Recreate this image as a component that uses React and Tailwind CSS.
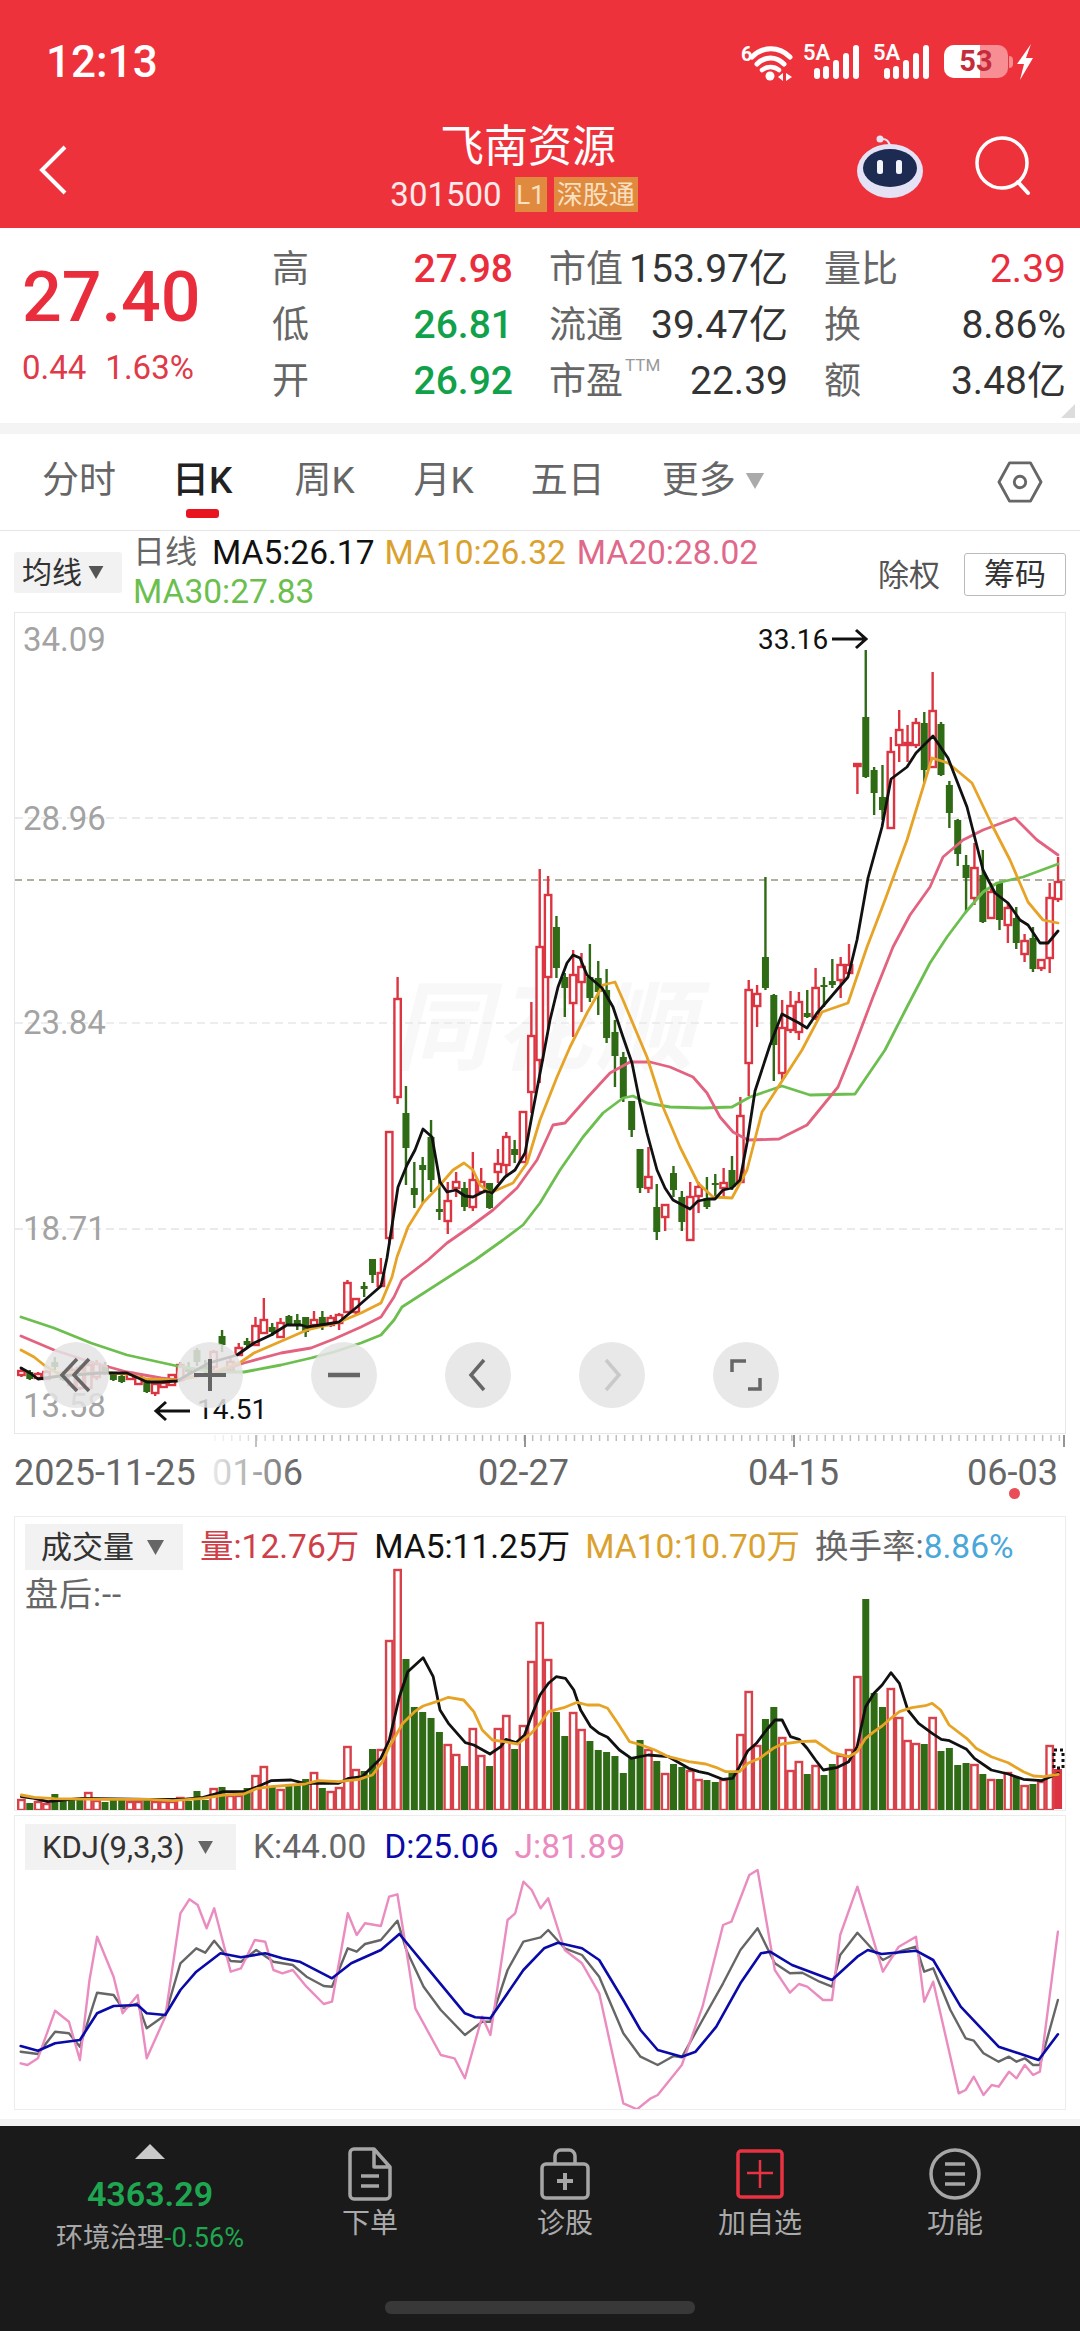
import { Fragment } from 'react';

const RED = '#dc3541';
const GREEN = '#2f6a14';

// [bodyTop, bodyBottom, wickTop, wickBottom, isRed]
const candles = [
  [1371, 1375, 1367, 1377, 1], [1372, 1379, 1370, 1380, 0], [1374, 1378, 1372, 1379, 1], [1372, 1379, 1370, 1380, 1],
  [1362, 1367, 1357, 1370, 0], [1373, 1380, 1371, 1381, 0], [1370, 1385, 1365, 1388, 1], [1368, 1388, 1365, 1390, 1],
  [1365, 1388, 1362, 1390, 1], [1364, 1377, 1360, 1380, 1], [1365, 1373, 1362, 1375, 0], [1373, 1380, 1372, 1381, 0],
  [1376, 1382, 1372, 1383, 0], [1373, 1379, 1372, 1380, 1], [1377, 1384, 1376, 1384, 1], [1380, 1392, 1379, 1393, 0],
  [1384, 1393, 1383, 1396, 1], [1383, 1387, 1382, 1388, 1], [1375, 1385, 1374, 1386, 1], [1365, 1380, 1362, 1382, 1],
  [1369, 1372, 1362, 1375, 0], [1350, 1362, 1348, 1366, 0], [1366, 1370, 1360, 1373, 0], [1352, 1367, 1350, 1370, 1],
  [1336, 1345, 1330, 1352, 0], [1362, 1370, 1358, 1372, 1], [1348, 1355, 1343, 1356, 1], [1341, 1345, 1338, 1347, 0],
  [1326, 1345, 1317, 1346, 1], [1320, 1333, 1298, 1334, 1], [1327, 1332, 1323, 1336, 0], [1323, 1337, 1318, 1337, 1],
  [1316, 1324, 1315, 1325, 0], [1320, 1325, 1314, 1330, 0], [1317, 1332, 1317, 1337, 0], [1320, 1325, 1311, 1327, 1],
  [1317, 1325, 1311, 1330, 0], [1318, 1325, 1315, 1327, 1], [1315, 1323, 1313, 1330, 1], [1283, 1312, 1280, 1313, 1],
  [1299, 1312, 1298, 1315, 1], [1286, 1289, 1282, 1297, 0], [1259, 1275, 1259, 1283, 0], [1273, 1286, 1258, 1287, 1],
  [1132, 1238, 1132, 1245, 1], [999, 1097, 977, 1104, 1], [1113, 1148, 1086, 1185, 0], [1188, 1195, 1162, 1208, 0],
  [1165, 1170, 1157, 1203, 0], [1137, 1180, 1120, 1192, 0], [1209, 1212, 1180, 1220, 0], [1201, 1221, 1182, 1234, 1],
  [1182, 1188, 1172, 1197, 1], [1188, 1207, 1182, 1211, 0], [1180, 1207, 1152, 1211, 1], [1182, 1192, 1168, 1193, 1],
  [1183, 1208, 1183, 1209, 0], [1164, 1172, 1149, 1183, 1], [1137, 1165, 1132, 1175, 1], [1149, 1155, 1140, 1163, 0],
  [1112, 1162, 1112, 1163, 1], [1036, 1092, 1002, 1113, 1], [947, 1060, 869, 1083, 1], [895, 977, 876, 1030, 1],
  [927, 968, 916, 978, 0], [977, 988, 973, 1017, 0], [975, 1003, 950, 1037, 1], [967, 982, 953, 1012, 1],
  [977, 998, 944, 1002, 0], [978, 992, 961, 1015, 0], [990, 1038, 969, 1043, 0], [1032, 1056, 1020, 1087, 0],
  [1057, 1098, 1052, 1102, 0], [1101, 1130, 1101, 1137, 0], [1149, 1188, 1149, 1193, 0], [1177, 1188, 1147, 1193, 1],
  [1207, 1232, 1184, 1240, 0], [1205, 1217, 1205, 1231, 1], [1173, 1190, 1166, 1197, 0], [1197, 1222, 1191, 1231, 0],
  [1197, 1240, 1182, 1240, 1], [1187, 1196, 1182, 1213, 1], [1198, 1207, 1177, 1209, 0], [1183, 1185, 1174, 1197, 0],
  [1183, 1188, 1168, 1197, 1], [1170, 1187, 1156, 1190, 0], [1116, 1182, 1097, 1183, 1], [990, 1063, 980, 1096, 1],
  [994, 1006, 985, 1027, 1], [957, 988, 877, 990, 0], [995, 1045, 994, 1081, 0], [1028, 1073, 1000, 1080, 1],
  [1006, 1030, 991, 1033, 1], [1002, 1032, 992, 1040, 1], [1013, 1017, 990, 1018, 0], [988, 1017, 968, 1020, 1],
  [985, 986, 977, 1007, 0], [981, 985, 959, 988, 0], [965, 980, 957, 998, 1], [965, 973, 944, 973, 1],
  [764, 766, 764, 794, 1], [717, 777, 650, 778, 0], [770, 793, 767, 815, 0], [797, 810, 765, 820, 0],
  [752, 828, 737, 828, 1], [730, 745, 710, 762, 1], [743, 745, 725, 762, 1], [723, 745, 718, 748, 1],
  [723, 770, 712, 783, 0], [711, 767, 672, 767, 1], [724, 775, 722, 776, 0], [785, 813, 781, 828, 0],
  [820, 854, 819, 866, 0], [865, 878, 855, 912, 0], [868, 898, 843, 905, 1], [875, 922, 850, 923, 0],
  [892, 918, 883, 918, 1], [882, 920, 882, 930, 0], [908, 925, 902, 943, 1], [918, 943, 907, 949, 0],
  [941, 954, 934, 962, 1], [938, 969, 927, 972, 0], [960, 968, 960, 971, 1], [898, 958, 883, 973, 1],
  [882, 899, 857, 902, 1],
];

const candleX = (i) => 21.4 + 8.36 * i;

const ma5 = [[21,1368],[30,1373],[38,1379],[60,1376],[100,1373],[127,1373],[147,1382],[161,1382],[177,1381],[191,1373],[209,1363],[237,1355],[254,1343],[271,1335],[287,1325],[301,1325],[307,1327],[327,1324],[339,1322],[357,1307],[381,1286],[387,1258],[398,1187],[407,1165],[415,1150],[423,1129],[432,1137],[440,1182],[447,1192],[456,1190],[465,1196],[473,1197],[485,1191],[492,1193],[505,1177],[515,1170],[525,1153],[533,1110],[542,1063],[550,1020],[558,987],[567,963],[573,955],[580,958],[587,975],[602,988],[613,1007],[623,1037],[632,1063],[640,1103],[647,1133],[657,1170],[665,1188],[673,1200],[690,1209],[698,1201],[708,1199],[715,1199],[723,1190],[732,1188],[740,1180],[747,1143],[755,1091],[770,1045],[782,1014],[799,1023],[807,1028],[817,1013],[824,1005],[848,977],[857,940],[868,878],[882,827],[891,779],[907,767],[916,753],[933,736],[948,758],[967,807],[983,870],[995,893],[1008,903],[1020,920],[1028,925],[1040,943],[1048,943],[1058,931]];
const ma10 = [[21,1350],[34,1357],[44,1365],[57,1373],[111,1373],[127,1374],[147,1379],[177,1380],[214,1372],[241,1362],[254,1353],[284,1340],[307,1330],[337,1323],[361,1313],[381,1303],[392,1277],[397,1257],[408,1227],[423,1203],[440,1185],[453,1170],[464,1163],[473,1170],[480,1185],[490,1193],[513,1183],[527,1163],[540,1120],[557,1077],[570,1047],[587,1013],[603,985],[615,982],[623,1000],[647,1057],[663,1107],[680,1147],[698,1183],[713,1197],[732,1198],[747,1170],[762,1112],[802,1050],[822,1012],[848,1003],[867,947],[885,900],[907,840],[932,758],[948,763],[972,783],[993,827],[1010,860],[1028,902],[1043,920],[1058,923]];
const ma20 = [[21,1336],[54,1350],[91,1362],[127,1372],[161,1378],[177,1380],[214,1373],[244,1363],[281,1353],[311,1348],[334,1339],[361,1327],[381,1317],[394,1297],[402,1280],[428,1260],[447,1243],[470,1227],[493,1210],[517,1188],[537,1160],[553,1125],[565,1123],[587,1098],[610,1073],[630,1062],[650,1062],[670,1067],[693,1077],[707,1093],[720,1117],[733,1132],[748,1140],[779,1139],[807,1125],[838,1087],[853,1050],[873,997],[893,947],[910,915],[930,887],[943,857],[963,840],[983,830],[1015,818],[1037,840],[1058,855]];
const ma30 = [[21,1317],[54,1328],[91,1343],[127,1355],[177,1366],[214,1372],[244,1372],[281,1365],[311,1358],[334,1352],[361,1343],[381,1335],[394,1320],[402,1307],[475,1260],[503,1240],[523,1225],[540,1203],[560,1170],[583,1137],[603,1113],[623,1098],[633,1096],[647,1103],[670,1107],[703,1108],[732,1107],[750,1097],[782,1086],[810,1095],[855,1094],[885,1050],[907,1007],[930,963],[947,937],[965,913],[983,892],[997,883],[1023,877],[1058,864]];

// volume heights in px, sign tells the colour: positive red, negative green
const volumes = [10,-6,8,6,-15,-8,-9,-9,17,9,-7,-9,-9,8,8,-8,8,8,8,12,-8,-18,-9,21,-22,14,14,-21,34,43,-23,20,-23,-24,-30,37,-21,18,22,63,40,-38,-60,60,169,240,-150,-102,-97,-91,-77,65,55,-43,81,54,-43,81,94,-60,84,148,187,150,-97,-73,97,80,-68,-59,-57,-53,-36,-51,-69,60,-48,36,-45,-42,39,30,-29,-27,30,-38,75,118,64,-90,-102,72,39,48,-35,44,-34,-45,54,60,133,-210,-116,-102,121,92,69,66,-65,92,-58,-61,-44,-46,45,-35,30,-30,37,-32,24,-25,28,64,40];

// volume averages, read from two crops of the panel
const fromLeftCrop = (p) => [14 + p[0] / 2.958, 1560 + p[1] / 3];
const fromRightCrop = (p) => [540 + p[0] / 2.958, 1560 + p[1] / 3];
const volMa5 = [
  ...[[22,710],[60,715],[100,725],[200,715],[400,718],[500,718],[560,712],[620,695],[680,695],[720,680],[760,662],[820,660],[860,670],[960,670],[990,655],[1030,650],[1085,595],[1110,540],[1140,410],[1165,335],[1210,293],[1240,350],[1260,450],[1285,490],[1335,548],[1360,555],[1408,582],[1440,560],[1455,538],[1485,548],[1510,525],[1530,470]].map(fromLeftCrop),
  ...[[0,405],[25,370],[48,350],[75,355],[100,390],[120,450],[150,500],[175,520],[200,532],[235,570],[270,595],[320,585],[380,590],[440,625],[470,635],[495,640],[540,658],[570,655],[590,620],[615,572],[640,550],[670,510],[695,480],[716,480],[741,530],[766,538],[790,565],[815,600],[838,630],[880,622],[913,605],[938,560],[963,440],[988,400],[1012,375],[1038,338],[1063,370],[1088,450],[1120,490],[1160,520],[1187,538],[1211,542],[1262,568],[1285,595],[1335,630],[1385,642],[1430,658],[1483,662],[1510,650],[1533,640]].map(fromRightCrop),
];
const volMa10 = [
  ...[[22,705],[60,712],[120,716],[250,718],[400,718],[470,722],[560,715],[620,705],[680,702],[720,685],[760,680],[860,672],[900,662],[960,665],[1020,658],[1060,645],[1090,605],[1110,560],[1150,490],[1185,455],[1210,438],[1250,425],[1285,412],[1330,420],[1360,455],[1385,510],[1415,540],[1450,545],[1490,552],[1530,520]].map(fromLeftCrop),
  ...[[0,490],[25,455],[70,443],[110,427],[140,435],[175,435],[200,445],[230,490],[265,545],[300,555],[340,570],[380,590],[440,605],[490,612],[520,622],[550,635],[590,635],[615,610],[650,595],[690,565],[716,552],[770,545],[815,543],[865,578],[913,590],[938,575],[963,535],[988,515],[1012,498],[1038,475],[1063,455],[1100,443],[1140,437],[1160,430],[1185,450],[1210,495],[1262,535],[1290,565],[1335,590],[1385,608],[1430,635],[1460,648],[1490,650],[1533,643]].map(fromRightCrop),
];

const fromKdjCrop = (p) => [p[0] / 1.452, 1800 + p[1] / 3];
const kdjJ = [[30,790],[40,795],[55,775],[80,632],[100,665],[116,780],[130,540],[141,410],[165,530],[178,640],[200,585],[213,775],[240,650],[262,340],[275,298],[287,315],[300,385],[311,325],[335,515],[350,505],[370,420],[385,425],[397,510],[410,520],[425,510],[445,560],[470,612],[482,605],[505,340],[518,405],[530,370],[553,378],[565,290],[577,283],[590,450],[603,625],[640,765],[660,775],[675,835],[700,650],[712,705],[737,360],[748,340],[760,245],[772,270],[785,325],[796,295],[820,450],[845,490],[870,580],[905,910],[925,928],[945,895],[955,885],[990,795],[1020,620],[1050,375],[1062,365],[1088,225],[1100,210],[1125,510],[1147,578],[1160,552],[1172,560],[1195,600],[1208,600],[1220,405],[1245,260],[1282,515],[1305,440],[1330,410],[1342,605],[1355,545],[1392,880],[1402,870],[1414,830],[1428,885],[1440,855],[1450,860],[1465,815],[1476,835],[1488,795],[1500,825],[1510,815],[1536,395]].map(fromKdjCrop);
const kdjK = [[30,755],[55,762],[80,695],[100,700],[116,740],[141,578],[165,585],[178,625],[200,610],[213,685],[240,645],[262,490],[285,445],[298,458],[311,422],[335,483],[350,485],[372,450],[397,485],[425,495],[445,530],[470,558],[482,560],[505,445],[518,455],[530,432],[553,420],[577,362],[590,450],[615,560],[640,630],[675,705],[700,665],[712,665],[737,510],[760,425],[785,412],[796,390],[820,445],[845,465],[870,530],[905,700],[930,770],[955,795],[978,768],[990,772],[1020,660],[1050,550],[1075,450],[1100,385],[1125,490],[1147,520],[1165,518],[1190,545],[1208,560],[1220,465],[1245,398],[1270,455],[1282,480],[1305,455],[1330,440],[1342,515],[1355,505],[1380,630],[1402,715],[1414,722],[1428,760],[1450,785],[1465,770],[1476,785],[1488,775],[1500,795],[1510,795],[1536,600]].map(fromKdjCrop);
const kdjD = [[30,738],[55,752],[80,730],[116,720],[141,640],[165,618],[200,615],[213,640],[240,645],[262,570],[285,515],[320,460],[350,472],[385,460],[410,475],[435,485],[482,535],[510,490],[553,450],[580,402],[615,490],[675,640],[690,652],[712,655],[760,510],[790,445],[810,428],[845,445],[870,480],[905,600],[930,690],[955,750],[990,770],[1010,755],[1040,680],[1075,550],[1105,460],[1118,455],[1150,495],[1208,540],[1245,470],[1260,450],[1280,462],[1330,452],[1355,480],[1395,620],[1450,740],[1508,780],[1536,703]].map(fromKdjCrop);

const toPoints = (line) => line.map((p) => `${p[0].toFixed(1)},${p[1].toFixed(1)}`).join(' ');

function Line({ points, color, width = 2.8 }) {
  return (
    <polyline
      points={toPoints(points)}
      fill="none"
      stroke={color}
      strokeWidth={width}
      strokeLinejoin="round"
      strokeLinecap="round"
    />
  );
}

function Candle({ data, index }) {
  const [top, bottom, wickTop, wickBottom, isRed] = data;
  const x = candleX(index);
  const color = isRed ? RED : GREEN;
  return (
    <Fragment>
      <line x1={x} x2={x} y1={wickTop} y2={wickBottom} stroke={color} strokeWidth="2.4" />
      {isRed ? (
        <rect x={x - 3.2} y={top} width="6.4" height={Math.max(bottom - top, 2)} fill="#fff" stroke={color} strokeWidth="2.4" />
      ) : (
        <rect x={x - 3.5} y={top} width="7" height={Math.max(bottom - top, 2)} fill={color} />
      )}
    </Fragment>
  );
}

function Triangle({ className }) {
  return (
    <svg viewBox="0 0 16 14" className={className}>
      <path d="M0 0h16L8 14z" fill="currentColor" />
    </svg>
  );
}

function SignalIcon() {
  return (
    <div className="relative h-[38px] w-[58px]">
      <span className="absolute top-0 left-0 text-[22px] leading-[20px] font-semibold text-white">5A</span>
      <svg viewBox="0 0 58 38" className="h-[38px] w-[58px]">
        <rect x="11" y="25" width="6" height="11" rx="3" fill="#fff" />
        <rect x="20" y="23" width="6" height="13" rx="3" fill="#fff" />
        <rect x="30" y="17" width="6" height="19" rx="3" fill="#fff" />
        <rect x="40" y="10" width="6" height="26" rx="3" fill="#fff" />
        <rect x="50" y="2" width="6" height="34" rx="3" fill="#fff" />
      </svg>
    </div>
  );
}

function StatusBar() {
  return (
    <div className="flex h-[103px] items-center justify-between pt-[20px] pr-[46px] pl-[46px] text-white">
      <span className="text-[44px] leading-none font-medium">12:13</span>
      <div className="flex items-center">
        <svg viewBox="0 0 52 38" className="h-[38px] w-[52px]">
          <text x="0" y="18" fontSize="20" fontWeight="700" fill="#fff">6</text>
          <path d="M11 14C22 3 38 3 49 14" fill="none" stroke="#fff" strokeWidth="5" strokeLinecap="round" />
          <path d="M16 21C24 13 35 13 43 21" fill="none" stroke="#fff" strokeWidth="5" strokeLinecap="round" />
          <path d="M21 27C26 23 33 23 38 27" fill="none" stroke="#fff" strokeWidth="4.5" strokeLinecap="round" />
          <circle cx="29" cy="33" r="4.5" fill="#fff" />
          <path d="M37 34l5-4v8zM45 30l6 4-6 4z" fill="#fff" />
        </svg>
        <div className="ml-[10px]"><SignalIcon /></div>
        <div className="ml-[12px]"><SignalIcon /></div>
        <div className="relative ml-[13px] flex h-[33px] w-[64px] items-center justify-center overflow-hidden rounded-[10px] bg-white/45">
          <div className="absolute inset-y-0 left-0 w-[36px] bg-white" />
          <span className="relative text-[29px] leading-none font-bold text-[#c62b3c]">53</span>
        </div>
        <div className="ml-[1px] h-[12px] w-[4px] rounded-r-sm bg-white/45" />
        <svg viewBox="0 0 18 36" className="ml-[3px] h-[36px] w-[18px]">
          <path d="M15 0L1 20h7L4 36 17 14h-7z" fill="#fff" />
        </svg>
      </div>
    </div>
  );
}

function NavBar() {
  return (
    <div className="relative flex h-[125px] items-start justify-center pt-[16px] text-white">
      <div className="absolute top-[42px] left-[38px]">
        <svg viewBox="0 0 30 50" className="h-[50px] w-[30px]">
          <path d="M27 2L4 25l23 23" fill="none" stroke="#fff" strokeWidth="4" />
        </svg>
      </div>
      <div className="mr-[24px] flex flex-col items-center">
        <span className="text-[44px] leading-[56px]">飞南资源</span>
        <div className="mt-[2px] mr-[28px] flex h-[35px] items-center">
          <span className="text-[33px] leading-none text-white/90">301500</span>
          <span className="ml-[13px] flex h-[35px] w-[32px] items-center justify-center bg-[#e08a3f] text-[26px] leading-none text-[#f8e0c0]">L1</span>
          <span className="ml-[7px] flex h-[35px] w-[84px] items-center justify-center bg-[#e08a3f] text-[26px] leading-none text-[#f8e0c0]">深股通</span>
        </div>
      </div>
      <div className="absolute top-[32px] left-[855px]">
        <svg viewBox="0 0 70 64" className="h-[64px] w-[70px]">
          <circle cx="25" cy="4" r="3.5" fill="#e9e4f4" />
          <path d="M27 4c5 0 6 2 8 6" fill="none" stroke="#e9e4f4" strokeWidth="2" />
          <ellipse cx="35" cy="36" rx="33" ry="27" fill="#e6e2f5" />
          <ellipse cx="35" cy="33" rx="27" ry="19" fill="#1d2a52" />
          <rect x="22" y="25" width="6" height="14" rx="2.5" fill="#f3f4fa" />
          <rect x="41" y="25" width="6" height="14" rx="2.5" fill="#f3f4fa" />
        </svg>
      </div>
      <div className="absolute top-[31px] left-[972px]">
        <svg viewBox="0 0 60 64" className="h-[64px] w-[60px]">
          <circle cx="30" cy="29" r="25" fill="none" stroke="#fff" strokeWidth="3.5" />
          <path d="M46 48l10 11" fill="none" stroke="#fff" strokeWidth="4" strokeLinecap="round" />
        </svg>
      </div>
    </div>
  );
}

const statRows = [
  { a: '高', b: '27.98', bc: 'text-[#ea2d3c]', c: '市值', d: '153.97亿', e: '量比', f: '2.39', fc: 'text-[#ea2d3c]' },
  { a: '低', b: '26.81', bc: 'text-[#12a14b]', c: '流通', d: '39.47亿', e: '换', f: '8.86%', fc: 'text-[#333]' },
  { a: '开', b: '26.92', bc: 'text-[#12a14b]', c: '市盈', ttm: true, d: '22.39', e: '额', f: '3.48亿', fc: 'text-[#333]' },
];

function StatsPanel() {
  return (
    <div className="relative flex h-[195px] bg-white">
      <div className="w-[272px] shrink-0 pt-[24px] pl-[22px]">
        <div className="text-[70px] leading-[90px] font-medium text-[#ea2d3c]">27.40</div>
        <div className="mt-[8px] flex text-[33px] leading-[36px] text-[#e03a48]">
          <span>0.44</span>
          <span className="ml-[19px]">1.63%</span>
        </div>
      </div>
      <div className="flex-1 pt-[13px] pr-[14px]">
        {statRows.map((row) => (
          <div key={row.a} className="grid h-14 grid-cols-[241px_239px_242px] items-center gap-x-9 text-[37px] leading-none">
            <div className="flex items-center justify-between">
              <span className="text-[#666]">{row.a}</span>
              <span className={`text-[39px] font-medium ${row.bc}`}>{row.b}</span>
            </div>
            <div className="flex items-center justify-between">
              <span className="relative whitespace-nowrap text-[#666]">
                {row.c}
                {row.ttm && <span className="absolute -top-[6px] left-[76px] text-[17px] text-[#999]">TTM</span>}
              </span>
              <span className="text-[39px] whitespace-nowrap text-[#333]">{row.d}</span>
            </div>
            <div className="flex items-center justify-between">
              <span className="text-[#666]">{row.e}</span>
              <span className={`text-[39px] whitespace-nowrap ${row.fc}`}>{row.f}</span>
            </div>
          </div>
        ))}
      </div>
      <div className="absolute right-[5px] bottom-[5px] h-0 w-0 border-b-[14px] border-l-[14px] border-b-[#dcdcdc] border-l-transparent" />
    </div>
  );
}

function Tabs() {
  return (
    <div className="relative flex h-[97px] items-center border-b border-[#e6e6e6] bg-white pb-[3px] pl-[42px] text-[37px] leading-none text-[#666]">
      <span>分时</span>
      <span className="relative ml-[56px] font-medium text-[#222]">
        日K
        <span className="absolute top-[47px] left-[14px] h-[9px] w-[33px] rounded-[3px] bg-[#e8141f]" />
      </span>
      <span className="ml-[62px]">周K</span>
      <span className="ml-[59px]">月K</span>
      <span className="ml-[57px]">五日</span>
      <span className="ml-[57px] flex items-center">
        更多
        <Triangle className="ml-[9px] h-[16px] w-[20px] text-[#aaa]" />
      </span>
      <svg viewBox="0 0 48 44" className="absolute top-[27px] right-[36px] h-[42px] w-[48px]">
        <path d="M13 2h22l11 20-11 20H13L2 22z" fill="none" stroke="#666" strokeWidth="3" strokeLinejoin="round" />
        <circle cx="24" cy="22" r="6" fill="none" stroke="#666" strokeWidth="3" />
      </svg>
    </div>
  );
}

function LegendRow() {
  return (
    <div className="flex h-[81px] bg-white pr-[14px] pl-[14px]">
      <div className="mt-[21px] flex h-[41px] w-[108px] items-center rounded-[3px] bg-[#f2f2f2] pl-[8px] text-[30px] leading-none text-[#333]">
        均线
        <Triangle className="ml-[6px] h-[13px] w-[16px] text-[#555]" />
      </div>
      <div className="ml-[11px] w-[660px] pt-[2px] text-[33.5px] leading-[39px] whitespace-nowrap">
        <div className="flex">
          <span className="text-[32px] text-[#666]">日线</span>
          <span className="ml-[15px] text-[#111]">MA5:26.17</span>
          <span className="ml-[10px] text-[#dba12e]">MA10:26.32</span>
          <span className="ml-[11px] text-[#e0688a]">MA20:28.02</span>
        </div>
        <div className="text-[#6cbf4f]">MA30:27.83</div>
      </div>
      <div className="ml-auto flex items-start pt-[22px]">
        <span className="mt-[7px] text-[31px] leading-none text-[#555]">除权</span>
        <span className="ml-[24px] flex h-[43px] w-[102px] items-center justify-center rounded-[3px] border border-[#bbb] text-[31px] leading-none text-[#333]">筹码</span>
      </div>
    </div>
  );
}

const priceLabels = [
  { text: '34.09', y: 'top-[7px]' },
  { text: '28.96', y: 'top-[186px]' },
  { text: '23.84', y: 'top-[390px]' },
  { text: '18.71', y: 'top-[596px]' },
  { text: '13.58', y: 'top-[773px]' },
];

function ChartButton({ left, children }) {
  return (
    <div className={`absolute top-[729px] flex h-[66px] w-[66px] items-center justify-center rounded-full bg-[#e4e4e4]/85 ${left}`}>
      <svg viewBox="0 0 40 40" className="h-10 w-10">{children}</svg>
    </div>
  );
}

function PriceChart() {
  return (
    <div className="relative mx-[14px] h-[822px] border border-[#e8e8e8] bg-white">
      <svg viewBox="15 613 1050 820" className="block h-full w-full">
        <text x="392" y="1062" fontSize="98" fontWeight="700" fontStyle="italic" fill="#f8f8f8" letterSpacing="4">同花顺</text>
        <line x1="15" x2="1065" y1="818" y2="818" stroke="#e4e4e4" strokeWidth="1.5" strokeDasharray="8 5" />
        <line x1="15" x2="1065" y1="1023" y2="1023" stroke="#e8e8e8" strokeWidth="1.5" strokeDasharray="8 5" />
        <line x1="15" x2="1065" y1="1229" y2="1229" stroke="#e4e4e4" strokeWidth="1.5" strokeDasharray="8 5" />
        <line x1="15" x2="1065" y1="880" y2="880" stroke="#b3ada0" strokeWidth="2" strokeDasharray="7 5" />
        {candles.map((candle, index) => (
          <Candle key={index} data={candle} index={index} />
        ))}
        <Line points={ma30} color="#6cbf4f" />
        <Line points={ma20} color="#e2627f" />
        <Line points={ma10} color="#e6a326" />
        <Line points={ma5} color="#111" />
        <path d="M832 639h34M856 630l10 9-10 9" fill="none" stroke="#111" strokeWidth="3" />
        <path d="M190 1411h-34M166 1402l-10 9 10 9" fill="none" stroke="#111" strokeWidth="3" />
      </svg>

      {priceLabels.map((label) => (
        <span key={label.text} className={`absolute left-[8px] text-[33px] leading-[40px] text-[#a3a3a3] ${label.y}`}>
          {label.text}
        </span>
      ))}
      <span className="absolute top-[10px] left-[743px] text-[28px] leading-[34px] text-[#111]">33.16</span>
      <span className="absolute top-[780px] left-[182px] text-[28px] leading-[34px] text-[#111]">14.51</span>

      <ChartButton left="left-[28px]">
        <path d="M21 4L6 20l15 16M33 4L18 20l15 16" fill="none" stroke="#666" strokeWidth="3.5" />
      </ChartButton>
      <ChartButton left="left-[162px]">
        <path d="M20 4v32M4 20h32" fill="none" stroke="#666" strokeWidth="4" />
      </ChartButton>
      <ChartButton left="left-[296px]">
        <path d="M4 20h32" fill="none" stroke="#666" strokeWidth="4.5" />
      </ChartButton>
      <ChartButton left="left-[430px]">
        <path d="M26 5L13 20l13 15" fill="none" stroke="#666" strokeWidth="3.5" />
      </ChartButton>
      <ChartButton left="left-[564px]">
        <path d="M14 5l13 15-13 15" fill="none" stroke="#c9c9c9" strokeWidth="3.5" />
      </ChartButton>
      <ChartButton left="left-[698px]">
        <path d="M20 6H6v11M22 34h12V23" fill="none" stroke="#666" strokeWidth="3.5" />
      </ChartButton>
    </div>
  );
}

const longTicks = [256, 525, 794, 1064];
const shortTicks = Array.from({ length: 102 }, (_, i) => 215 + i * 8.36);

function TimeAxis() {
  return (
    <div className="relative h-[82px] bg-white">
      <svg viewBox="0 0 1080 14" className="block h-[14px] w-full">
        {shortTicks.map((x) => (
          <line key={x} x1={x} x2={x} y1="1" y2="7" stroke="#bdbdbd" strokeWidth="1.5" />
        ))}
        {longTicks.map((x) => (
          <line key={x} x1={x} x2={x} y1="1" y2="13" stroke="#8a8a8a" strokeWidth="1.8" />
        ))}
      </svg>
      <div className="flex pt-[5px] pl-[14px] text-[36px] leading-[40px] whitespace-nowrap text-[#666]">
        <span className="w-[184px]">2025-11-25</span>
        <span className="ml-[14px] w-[92px]">01-06</span>
        <span className="ml-[174px] w-[92px]">02-27</span>
        <span className="ml-[178px] w-[92px]">04-15</span>
        <span className="ml-[127px] w-[92px]">06-03</span>
      </div>
      <div className="absolute top-0 bottom-0 left-[198px] w-[100px] bg-gradient-to-r from-white to-transparent" />
      <div className="absolute top-[54px] left-[1009px] h-[11px] w-[11px] rounded-full bg-[#e94d58]" />
    </div>
  );
}

function VolumePanel() {
  return (
    <div className="relative mx-[14px] h-[295px] border border-[#ececec] bg-white">
      <svg viewBox="15 1517 1050 293" className="absolute inset-0 h-full w-full">
        {volumes.map((v, i) => {
          const x = candleX(i);
          const h = Math.abs(v);
          if (i === 124) return <rect key={i} x={x - 4} y={1809 - h} width="8" height={h} fill="#dc3541" />;
          return v > 0 ? (
            <rect key={i} x={x - 3.2} y={1809 - h + 1} width="6.4" height={h} fill="#fff" stroke="#d9414a" strokeWidth="2.4" />
          ) : (
            <rect key={i} x={x - 3.5} y={1809 - h} width="7" height={h + 1} fill={GREEN} />
          );
        })}
        <rect x="1054" y="1750" width="9" height="18" fill="none" stroke="#111" strokeWidth="3" strokeDasharray="3 3" />
        <Line points={volMa5} color="#111" />
        <Line points={volMa10} color="#e6a326" />
      </svg>
      <div className="relative pt-[7px] pl-[10px]">
        <div className="flex items-center text-[33.5px] leading-none whitespace-nowrap">
          <div className="flex h-[46px] w-[158px] items-center bg-[#f2f2f2] pl-[16px] text-[31px] text-[#333]">
            成交量
            <Triangle className="ml-[13px] h-[15px] w-[17px] text-[#666]" />
          </div>
          <span className="ml-[17px] text-[#cf3f49]">量:12.76万</span>
          <span className="ml-[15px] text-[#111]">MA5:11.25万</span>
          <span className="ml-[15px] text-[#dba12e]">MA10:10.70万</span>
          <span className="ml-[15px] text-[#666]">
            换手率:<span className="text-[#4aa7d9]">8.86%</span>
          </span>
        </div>
        <div className="mt-[7px] text-[33px] leading-[36px] tracking-[1px] text-[#666]">盘后:--</div>
      </div>
    </div>
  );
}

function KdjPanel() {
  return (
    <div className="relative mx-[14px] mt-[4px] h-[295px] border border-[#ececec] bg-white">
      <svg viewBox="15 1816 1050 293" className="absolute inset-0 h-full w-full">
        <Line points={kdjK} color="#666" width="2.4" />
        <Line points={kdjJ} color="#ea8cc0" width="2.4" />
        <Line points={kdjD} color="#0a0aa8" width="2.6" />
      </svg>
      <div className="relative flex items-center pt-[8px] pl-[10px] text-[33.5px] leading-none whitespace-nowrap">
        <div className="flex h-[46px] w-[211px] items-center bg-[#f2f2f2] pl-[17px] text-[31px] text-[#333]">
          KDJ(9,3,3)
          <Triangle className="ml-[13px] h-[13px] w-[15px] text-[#666]" />
        </div>
        <span className="ml-[17px] text-[#666]">K:44.00</span>
        <span className="ml-[18px] text-[#0a0aa8]">D:25.06</span>
        <span className="ml-[16px] text-[#ea8cc0]">J:81.89</span>
      </div>
    </div>
  );
}

function NavItem({ label, center, labelClass = 'text-[#aaa]', children }) {
  return (
    <div className={`absolute top-[20px] flex w-[120px] flex-col items-center ${center}`}>
      <div className="flex h-[56px] items-center">{children}</div>
      <span className={`mt-[4px] text-[28px] leading-[36px] ${labelClass}`}>{label}</span>
    </div>
  );
}

function BottomBar() {
  return (
    <div className="relative h-[205px] bg-[#1a1a1a]">
      <div className="absolute top-[18px] left-0 flex w-[300px] flex-col items-center">
        <div className="h-0 w-0 border-x-[15px] border-b-[15px] border-x-transparent border-b-[#c9c9c9]" />
        <div className="mt-[13px] text-[34px] leading-[44px] font-semibold text-[#1fa650]">4363.29</div>
        <div className="mt-[6px] text-[27px] leading-[32px] whitespace-nowrap text-[#a8a8a8]">
          环境治理<span className="text-[#1fa650]">-0.56%</span>
        </div>
      </div>
      <NavItem label="下单" center="left-[310px]">
        <svg viewBox="0 0 44 54" className="h-[54px] w-[44px]">
          <path d="M6 2h20l16 18v28a4 4 0 0 1-4 4H6a4 4 0 0 1-4-4V6a4 4 0 0 1 4-4zM26 2v18h16" fill="none" stroke="#a6a6a6" strokeWidth="3.5" strokeLinejoin="round" />
          <path d="M13 29h18M13 39h18" stroke="#a6a6a6" strokeWidth="3.5" />
        </svg>
      </NavItem>
      <NavItem label="诊股" center="left-[505px]">
        <svg viewBox="0 0 50 52" className="h-[52px] w-[50px]">
          <path d="M15 16V8a6 6 0 0 1 6-6h8a6 6 0 0 1 6 6v8" fill="none" stroke="#a6a6a6" strokeWidth="3.5" />
          <rect x="2" y="16" width="46" height="34" rx="4" fill="none" stroke="#a6a6a6" strokeWidth="3.5" />
          <path d="M25 25v17M17 33h16" stroke="#a6a6a6" strokeWidth="4" />
        </svg>
      </NavItem>
      <NavItem label="加自选" center="left-[700px]">
        <svg viewBox="0 0 48 50" className="h-[50px] w-[48px]">
          <rect x="2" y="2" width="44" height="46" rx="3" fill="none" stroke="#e93342" strokeWidth="3.5" />
          <path d="M24 11v28M11 24h26" stroke="#e93342" strokeWidth="2.5" />
        </svg>
      </NavItem>
      <NavItem label="功能" center="left-[895px]">
        <svg viewBox="0 0 52 52" className="h-[52px] w-[52px]">
          <circle cx="26" cy="26" r="24" fill="none" stroke="#a6a6a6" strokeWidth="3.5" />
          <path d="M16 16h20M16 26h20M16 36h20" stroke="#a6a6a6" strokeWidth="3.5" />
        </svg>
      </NavItem>
      <div className="absolute top-[175px] left-[385px] h-[13px] w-[310px] rounded-[6px] bg-[#383838]" />
    </div>
  );
}

export default function App() {
  return (
    <div className="h-[2331px] w-[1080px] overflow-hidden bg-white font-['Roboto','Noto_Sans_CJK_SC',sans-serif]">
      <div className="h-[228px] bg-[#ee323b]">
        <StatusBar />
        <NavBar />
      </div>
      <StatsPanel />
      <div className="h-[11px] bg-[#f4f4f4]" />
      <Tabs />
      <LegendRow />
      <PriceChart />
      <TimeAxis />
      <VolumePanel />
      <KdjPanel />
      <div className="mt-[9px] h-[7px] bg-[#f2f2f2]" />
      <BottomBar />
    </div>
  );
}
